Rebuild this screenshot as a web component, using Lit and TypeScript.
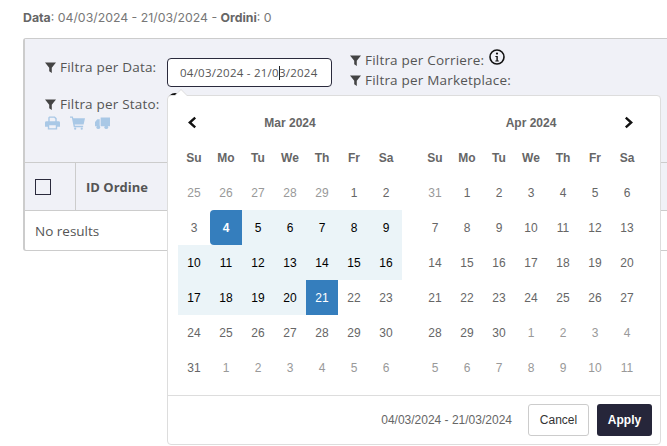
import { LitElement, html, css } from "lit";
import { customElement } from "lit/decorators.js";

const funnel = html`<svg class="funnel" viewBox="0 0 12 12"><path d="M0 .5h12L7.4 6.2V12L4.600 10V6.200z" fill="currentColor"/></svg>`;

interface Cell { d: number; off: boolean; }

function weeks(first: number, prevLen: number, len: number): Cell[] {
  const cells: Cell[] = [];
  for (let i = first - 1; i >= 0; i--) cells.push({ d: prevLen - i, off: true });
  for (let d = 1; d <= len; d++) cells.push({ d, off: false });
  let n = 1;
  while (cells.length < 42) cells.push({ d: n++, off: true });
  return cells;
}

const days = ["Su", "Mo", "Tu", "We", "Th", "Fr", "Sa"];

@customElement("app-root")
export class AppRoot extends LitElement {
  static styles = css`
    :host { display: block; width: 667px; height: 446px; position: relative; overflow: hidden; background: #fff; font-family: "Open Sans", sans-serif; color: #555; }
    .summary { padding: 10px 0 0 23px; height: 38px; box-sizing: border-box; font: 12.3px/15px Inter, sans-serif; color: #777; }
    .summary b { font-weight: 700; color: #666; }
    .card { margin-left: 23px; height: 213px; box-sizing: border-box; border: 1px solid #ccc; border-left-width: 2px; border-right: 0; border-radius: 3px 0 0 3px; display: flex; flex-direction: column; }
    .filters { height: 124px; flex: none; box-sizing: border-box; background: #f0f1f7; border-bottom: 1px solid #ccc; padding: 12px 0 0 20px; position: relative; }
    .top { display: flex; }
    .col1 { width: 122px; flex: none; padding-top: 7px; }
    .col3 { margin-left: 18px; display: flex; flex-direction: column; gap: 2px; padding-top: 0; }
    .label { display: flex; align-items: center; gap: 4px; font-size: 13.5px; letter-spacing: .2px; line-height: 18px; color: #555; white-space: nowrap; }
    .funnel { width: 11px; height: 11px; color: #444; flex: none; }
    .info { width: 16px; height: 16px; margin: -6px 0 0 1px; }
    .input { width: 165px; height: 29px; margin-top: 7px; box-sizing: border-box; border: 1px solid #2a2a3c; border-radius: 4px; background: #fff; font-size: 11.5px; letter-spacing: .25px; line-height: 27px; padding-left: 12px; color: #555; white-space: nowrap; }
    .caret { display: inline-block; width: 1px; height: 14px; background: #222; vertical-align: -3px; margin: 0 -1px 0 0; }
    .row2 { margin-top: 6px; display: flex; align-items: flex-start; }
    .spinner { width: 14px; height: 14px; box-sizing: border-box; border: 2px solid #111; border-radius: 50%; margin: -2px 0 0 8px; }
    .icons { display: flex; gap: 10px; margin-top: 3px; color: #a9c8e6; align-items: center; }
    .icons svg { height: 14px; width: 15px; }
    .thead { height: 48px; flex: none; background: #f0f1f7; border-bottom: 1px solid #ccc; display: flex; box-sizing: border-box; }
    .th-check { width: 51px; flex: none; border-right: 1px solid #ccc; display: flex; align-items: center; padding-left: 10px; box-sizing: border-box; }
    .check { width: 16px; height: 16px; box-sizing: border-box; border: 1px solid #2a2a3c; }
    .th { padding-left: 10px; font-size: 13px; font-weight: 700; line-height: 49px; color: #555; }
    .noresults { padding-left: 10px; font-size: 13.5px; line-height: 40px; color: #555; }

    .picker { position: absolute; left: 167px; top: 95px; width: 494px; height: 350px; box-sizing: border-box; background: #fff; border: 1px solid #ddd; border-radius: 4px; font: 12px "Liberation Sans", Arial, sans-serif; }
    .picker::before { content: ""; position: absolute; left: 6px; top: -7px; border-left: 7px solid transparent; border-right: 7px solid transparent; border-bottom: 7px solid #ddd; }
    .picker::after { content: ""; position: absolute; left: 7px; top: -6px; border-left: 6px solid transparent; border-right: 6px solid transparent; border-bottom: 6px solid #fff; }
    .months { display: flex; gap: 17px; padding: 9px 0 0 10px; }
    .month { display: grid; grid-template-columns: repeat(7, 32px); grid-auto-rows: 35px; align-items: stretch; }
    .title { grid-column: 2 / span 5; display: flex; align-items: center; justify-content: center; font-weight: 700; color: #666; }
    .nav { display: flex; align-items: center; justify-content: center; }
    .nav svg { width: 13px; height: 13px; }
    .nav.prev svg { margin-right: 4px; }
    .nav.next svg { margin-left: 3px; }
    .dow { display: flex; align-items: center; justify-content: center; font-weight: 700; color: #666; }
    .c { display: flex; align-items: center; justify-content: center; color: #666; }
    .c.off { color: #999; }
    .c.range { background: #ebf4f8; color: #000; }
    .c.active { background: #357ebd; color: #fff; }
    .c.start { border-radius: 4px 0 0 4px; font-weight: 700; }
    .foot { position: absolute; left: 0; right: 0; bottom: 0; height: 49px; border-top: 1px solid #ddd; display: flex; align-items: center; justify-content: flex-end; padding-right: 8px; box-sizing: border-box; }
    .range-text { color: #666; margin-right: 16px; }
    .btn { height: 32px; box-sizing: border-box; border-radius: 3px; font: 700 12px "Liberation Sans", Arial, sans-serif; display: flex; align-items: center; justify-content: center; }
    .cancel { width: 61px; background: #fff; border: 1px solid #ccc; color: #333; font-weight: 400; margin-right: 8px; }
    .apply { width: 55px; background: #26263a; color: #fff; }
  `;

  private month(title: string, cells: Cell[], left: boolean, right: boolean, highlight: boolean) {
    return html`<div class="month">
      <div class="nav prev">${left ? html`<svg viewBox="0 0 12 12"><path d="M8.500 1.500 3.500 6l5 4.500" fill="none" stroke="#111" stroke-width="2.200"/></svg>` : ""}</div>
      <div class="title">${title}</div>
      <div class="nav next">${right ? html`<svg viewBox="0 0 12 12"><path d="M3.500 1.500 8.500 6l-5 4.500" fill="none" stroke="#111" stroke-width="2.200"/></svg>` : ""}</div>
      ${days.map((d) => html`<div class="dow">${d}</div>`)}
      ${cells.map((c) => {
        const inRange = highlight && !c.off && c.d >= 4 && c.d <= 21;
        const cls = ["c"];
        if (c.off) cls.push("off");
        if (inRange) cls.push("range");
        if (highlight && !c.off && c.d === 4) cls.push("active", "start");
        if (highlight && !c.off && c.d === 21) cls.push("active");
        return html`<div class=${cls.join(" ")}>${c.d}</div>`;
      })}
    </div>`;
  }

  render() {
    return html`
      <div class="summary"><b>Data</b>: 04/03/2024 - 21/03/2024 - <b>Ordini</b>: 0</div>
      <div class="card">
        <div class="filters">
          <div class="top">
            <div class="col1"><div class="label">${funnel}Filtra per Data:</div></div>
            <div class="input">04/03/2024 - 21/0<span class="caret"></span>3/2024</div>
            <div class="col3">
              <div class="label">${funnel}Filtra per Corriere:
                <svg class="info" viewBox="0 0 16 16"><circle cx="8" cy="8" r="7" fill="none" stroke="#111" stroke-width="1.600"/><circle cx="8" cy="4.600" r="1.100" fill="#111"/><path d="M6.400 7h2.400v4.400h1v1.100H6.300v-1.100h1.100V8.100H6.400z" fill="#111"/></svg>
              </div>
              <div class="label">${funnel}Filtra per Marketplace:</div>
            </div>
          </div>
          <div class="row2">
            <div class="label">${funnel}Filtra per Stato:</div>
            <div class="spinner"></div>
          </div>
          <div class="icons">
            <svg viewBox="0 0 16 14"><path fill="currentColor" fill-rule="evenodd" d="M4.500 0h6L12.500 2v3h2A1.500 1.500 0 0 1 16 6.500V11h-3v3H3v-3H0V6.500A1.500 1.500 0 0 1 1.500 5h2V1zM5 1.500V5h6V2.800L9.800 1.500zM4.500 9.500v3h7v-3z"/></svg>
            <svg viewBox="0 0 16 14"><path fill="currentColor" d="M0 0h3l.5 2H16l-1.500 6.500H5l.3 1.500H14v1.500H4L2 1.500H0z"/><circle cx="5.500" cy="13" r="1.200" fill="currentColor"/><circle cx="12.500" cy="13" r="1.200" fill="currentColor"/></svg>
            <svg viewBox="0 0 16 14"><path fill="currentColor" d="M6 1h10v9.500H6zM0 6l2.500-3H5v7.500H0z"/><circle cx="3.500" cy="11.500" r="2" fill="currentColor"/><circle cx="12" cy="11.500" r="2" fill="currentColor"/></svg>
          </div>
        </div>
        <div class="thead">
          <div class="th-check"><div class="check"></div></div>
          <div class="th">ID Ordine</div>
        </div>
        <div class="noresults">No results</div>
      </div>
      <div class="picker">
        <div class="months">
          ${this.month("Mar 2024", weeks(5, 29, 31), true, false, true)}
          ${this.month("Apr 2024", weeks(1, 31, 30), false, true, false)}
        </div>
        <div class="foot">
          <span class="range-text">04/03/2024 - 21/03/2024</span>
          <div class="btn cancel">Cancel</div>
          <div class="btn apply">Apply</div>
        </div>
      </div>
    `;
  }
}
